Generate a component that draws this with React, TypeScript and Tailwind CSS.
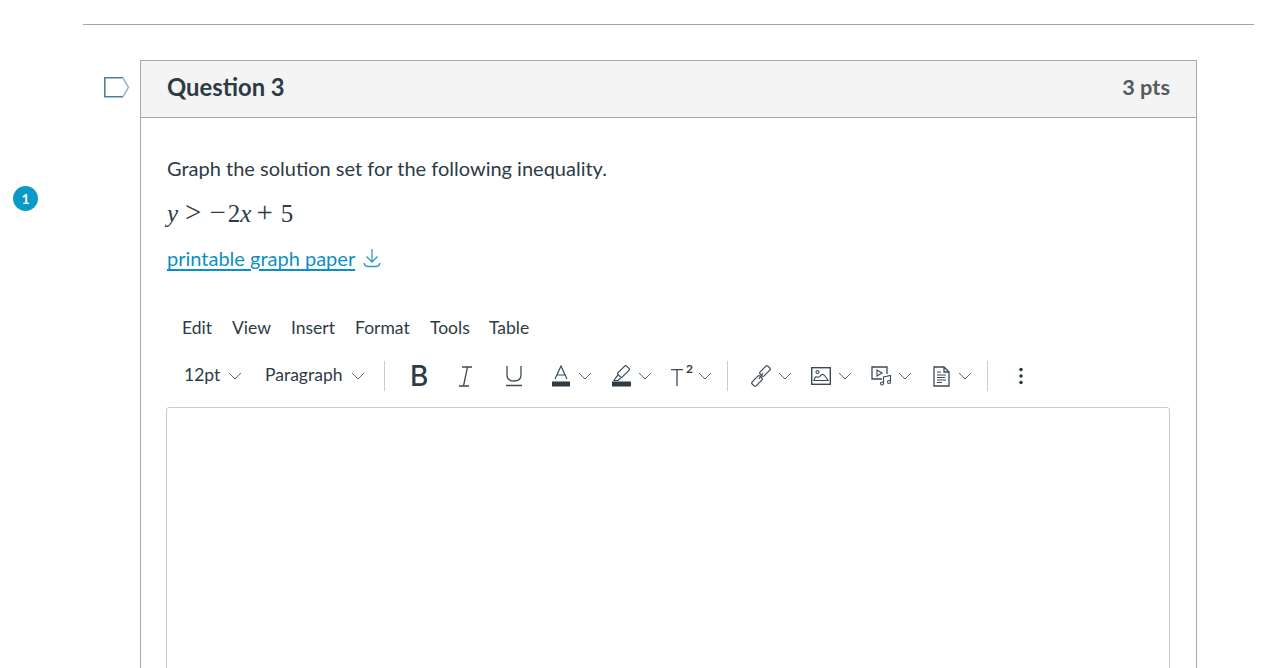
import React from 'react';

const Chevron = () => (
  <svg width="14" height="14" viewBox="0 0 14 14" fill="none" stroke="#5f6b76" strokeWidth="1" className="shrink-0">
    <path d="M1 4 L7 10 L13 4" />
  </svg>
);

const Divider = () => <div className="w-px h-[30px] bg-[#c7cdd1] shrink-0" />;

const menus = [
  { label: 'Edit', w: 'w-[50px]' },
  { label: 'View', w: 'w-[59px]' },
  { label: 'Insert', w: 'w-[64px]' },
  { label: 'Format', w: 'w-[75px]' },
  { label: 'Tools', w: 'w-[59px]' },
  { label: 'Table', w: 'w-[60px]' },
];

const ToolButton: React.FC<{ w: string; children: React.ReactNode }> = ({ w, children }) => (
  <div className={`flex items-center justify-between shrink-0 ${w}`}>{children}</div>
);

export default function App() {
  return (
    <div className="w-full h-[668px] overflow-hidden bg-white font-['Lato','Liberation_Sans',sans-serif] text-[#2d3b45] relative">
      {/* Unread badge */}
      <div className="absolute left-[13px] top-[186px] w-[25px] h-[25px] rounded-full bg-[#0a9ac9] text-white text-[14px] font-bold flex items-center justify-center">
        1
      </div>

      <div className="pt-[24px] pl-[83px] pr-[14px]">
        <div className="h-px bg-[#a5a5a5]" />
      </div>

      <div className="mt-[35px] flex pl-[104px]">
        {/* Flag */}
        <div className="w-[36px] shrink-0 pt-[17px]">
          <svg width="26" height="21" viewBox="0 0 26 21" fill="none" strokeWidth="1.6">
            <path d="M19 0.8 H0.8 V19.8 H19" stroke="#4f7fa0" />
            <path d="M19 0.8 L24.4 10.3 L19 19.8" stroke="#9fb7c8" />
          </svg>
        </div>

        {/* Question card */}
        <div className="w-[1057px] h-[700px] border border-[#a8a8a8] shrink-0">
          <div className="h-[57px] bg-[#f4f4f4] border-b border-[#a8a8a8] flex items-center justify-between pl-[26px] pr-[26px] pb-[3px]">
            <div className="text-[23.8px] font-bold leading-none">Question 3</div>
            <div className="text-[21.8px] font-bold text-[#565b60] leading-none mb-[2px]">3 pts</div>
          </div>

          <div className="pl-[25px] pr-[26px]">
            <p className="mt-[37px] pl-px text-[20px] leading-[26px]">Graph the solution set for the following inequality.</p>
            <p className="mt-[18px] h-[28px] pl-px flex items-baseline text-[25px] leading-[26px] font-['Liberation_Serif',serif]">
              <i>y</i>
              <span className="ml-[7px] text-[29px] leading-[26px]">&gt;</span>
              <span className="ml-[8px] text-[29px] leading-[26px]">−</span>
              <span className="ml-[2px]">2</span>
              <i>x</i>
              <span className="ml-[5px] text-[29px] leading-[26px]">+</span>
              <span className="ml-[8px]">5</span>
            </p>
            <div className="mt-[18px] pl-px flex items-center gap-[7px] text-[20px] leading-[26px] text-[#0a8fc7]">
              <span className="underline underline-offset-[3px]">printable graph paper</span>
              <svg width="20" height="20" viewBox="0 0 20 20" fill="none" stroke="#2b9bcc" strokeWidth="1.3">
                <path d="M10 1 V14 M4.5 8.5 L10 14 L15.5 8.5 M2 15 Q3 18.5 6 18.5 H14 Q17 18.5 18 15" />
              </svg>
            </div>

            {/* Menu bar */}
            <div className="mt-[45px] flex pl-[16px] text-[17.5px] leading-[24px]">
              {menus.map(m => (
                <span key={m.label} className={m.w}>{m.label}</span>
              ))}
            </div>

            {/* Toolbar */}
            <div className="mt-[21px] h-[30px] flex items-center pl-[18px] text-[17.5px]">
              <ToolButton w="w-[58px]"><span className="mb-[2px]">12pt</span><Chevron /></ToolButton>
              <div className="w-[23px]" />
              <ToolButton w="w-[100px]"><span className="mb-[2px]">Paragraph</span><Chevron /></ToolButton>
              <div className="w-[19px]" />
              <Divider />
              <div className="w-[25px]" />
              <span className="w-[18px] text-[28px] font-['Inter',sans-serif] font-medium leading-none">B</span>
              <div className="w-[30px]" />
              <svg width="15" height="21" viewBox="0 0 15 21" fill="none" stroke="#3b4a55" strokeWidth="1.3" className="shrink-0">
                <path d="M4 1 H14 M1 20 H11 M9.5 1 L5.5 20" />
              </svg>
              <div className="w-[32px]" />
              <svg width="18" height="22" viewBox="0 0 18 22" fill="none" stroke="#3b4a55" strokeWidth="1.3" className="shrink-0">
                <path d="M2 1 V10 Q2 16 9 16 Q16 16 16 10 V1 M1 20.5 H17" />
              </svg>
              <div className="w-[29px]" />
              <ToolButton w="w-[40px]">
                <svg width="18" height="22" viewBox="0 0 18 22" fill="none">
                  <path d="M3 14 L9 1 L15 14 M5 10 H13" stroke="#3b4a55" strokeWidth="1.2" />
                  <rect y="16.5" width="18" height="5" fill="#2d3b45" />
                </svg>
                <Chevron />
              </ToolButton>
              <div className="w-[20px]" />
              <ToolButton w="w-[40px]">
                <svg width="19" height="22" viewBox="0 0 19 22" fill="none">
                  <g stroke="#3b4a55" strokeWidth="1.2">
                    <rect x="-6" y="-3" width="12" height="6" rx="1" transform="translate(11.5 6.5) rotate(-45)" />
                    <path d="M6 10 L3.5 13 L2 15.5 H6 L8.5 13" />
                  </g>
                  <rect y="16.5" width="19" height="5" fill="#2d3b45" />
                </svg>
                <Chevron />
              </ToolButton>
              <div className="w-[19px]" />
              <ToolButton w="w-[41px]">
                <div className="relative w-[22px] h-[22px]">
                  <svg width="22" height="22" viewBox="0 0 22 22" fill="none">
                    <path d="M0 4.6 H12 M6 4.6 V21" stroke="#3b4a55" strokeWidth="1.3" />
                  </svg>
                  <span className="absolute right-0 top-[-2px] text-[12px] font-bold leading-none">2</span>
                </div>
                <Chevron />
              </ToolButton>
              <div className="w-[15px]" />
              <Divider />
              <div className="w-[23px]" />
              <ToolButton w="w-[41px]">
                <svg width="20" height="22" viewBox="0 0 20 22" fill="none" stroke="#3b4a55" strokeWidth="1.2">
                  <rect x="-5.5" y="-2.8" width="11" height="5.6" rx="1.5" transform="translate(6 16) rotate(-45)" />
                  <rect x="-5.5" y="-2.8" width="11" height="5.6" rx="1.5" transform="translate(14 6) rotate(-45)" />
                  <path d="M8 14 L12 8" />
                </svg>
                <Chevron />
              </ToolButton>
              <div className="w-[19px]" />
              <ToolButton w="w-[41px]">
                <svg width="20" height="18" viewBox="0 0 20 18" fill="none" stroke="#3b4a55" strokeWidth="1.2">
                  <rect x="0.7" y="0.7" width="18.6" height="16.6" strokeWidth="1.4" />
                  <circle cx="6.5" cy="5" r="1.5" />
                  <path d="M3 13.5 Q4 9 6 10 Q8 11 10 8 Q12 6.5 14 9 Q16 11.5 17 13.5 Z" />
                </svg>
                <Chevron />
              </ToolButton>
              <div className="w-[19px]" />
              <ToolButton w="w-[41px]">
                <svg width="21" height="20" viewBox="0 0 21 20" fill="none" stroke="#3b4a55" strokeWidth="1.1">
                  <path d="M11 13 H1 V1 H16 V8" strokeWidth="1.3" />
                  <path d="M6 4 L11 7 L6 10 Z" />
                  <path d="M12.5 17 V11 L19.5 9.5 V15.5" />
                  <circle cx="11" cy="17.5" r="1.5" />
                  <circle cx="18" cy="16" r="1.5" />
                </svg>
                <Chevron />
              </ToolButton>
              <div className="w-[21px]" />
              <ToolButton w="w-[39px]">
                <svg width="17" height="21" viewBox="0 0 17 21" fill="none" stroke="#3b4a55" strokeWidth="1.3">
                  <path d="M1 1 H11 L16 6 V20 H1 Z M11 1 V6 H16" />
                  <path d="M4 6 H8 M4 9 H13 M4 11.5 H12 M4 14 H13 M4 16.5 H9" strokeWidth="1.1" />
                </svg>
                <Chevron />
              </ToolButton>
              <div className="w-[15px]" />
              <Divider />
              <div className="w-[31px]" />
              <svg width="4" height="18" viewBox="0 0 4 18" fill="#2d3b45" className="shrink-0">
                <circle cx="2" cy="2.5" r="1.8" />
                <circle cx="2" cy="9" r="1.8" />
                <circle cx="2" cy="15.5" r="1.8" />
              </svg>
            </div>

            {/* Editor area */}
            <div className="mt-[16px] w-[1004px] h-[400px] border border-[#c7cdd1] rounded-[3px]" />
          </div>
        </div>
      </div>
    </div>
  );
}
